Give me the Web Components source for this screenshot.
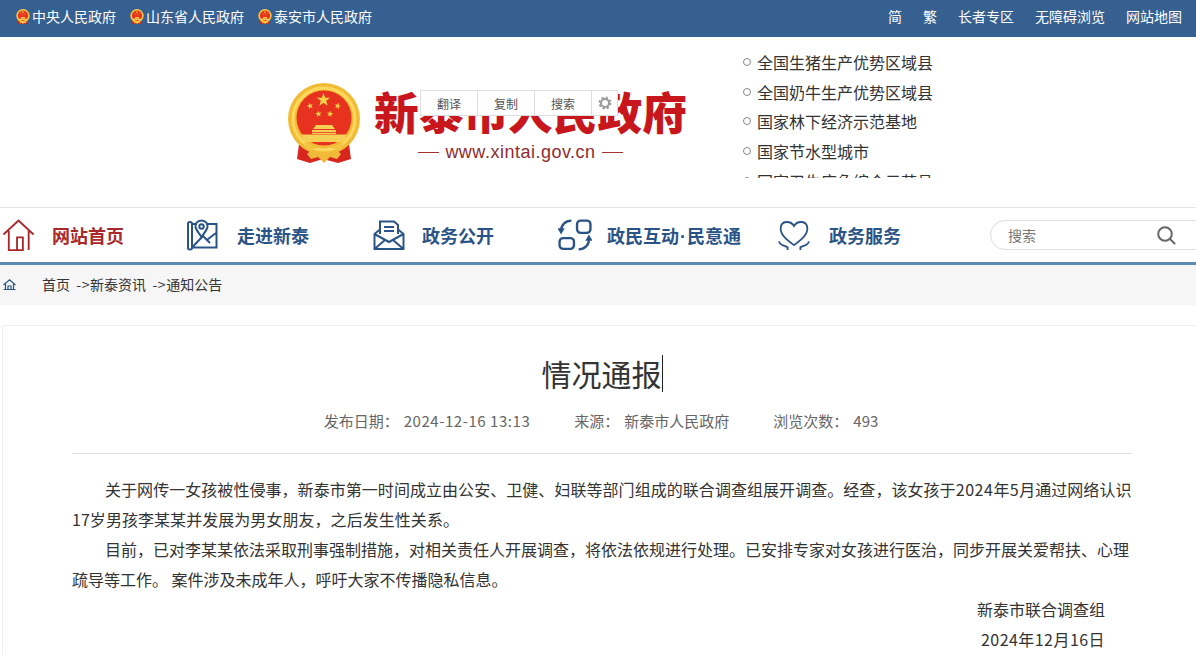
<!DOCTYPE html>
<html lang="zh-CN">
<head>
<meta charset="utf-8">
<title>情况通报</title>
<style>
html, body { margin: 0; padding: 0; height: 655px; overflow: hidden; background: #fff; }
body { font-family: "Noto Sans CJK SC", "Liberation Sans", sans-serif; color: #333; }
.num { letter-spacing: .6px; }
.arrow { letter-spacing: .6px; }
.dot { font-family: "Liberation Sans", sans-serif; margin: 0 1px; }
</style>
</head>
<body>
<site-page>
  <top-bar>
    <top-link slot="left">中央人民政府</top-link>
    <top-link slot="left">山东省人民政府</top-link>
    <top-link slot="left">泰安市人民政府</top-link>
    <span slot="right">简</span>
    <span slot="right">繁</span>
    <span slot="right">长者专区</span>
    <span slot="right">无障碍浏览</span>
    <span slot="right">网站地图</span>
  </top-bar>

  <site-masthead>
    <honor-item>全国生猪生产优势区域县</honor-item>
    <honor-item>全国奶牛生产优势区域县</honor-item>
    <honor-item>国家林下经济示范基地</honor-item>
    <honor-item>国家节水型城市</honor-item>
    <honor-item>国家卫生应急综合示范县</honor-item>
  </site-masthead>

  <main-nav>
    <nav-item style="--nav-color:#a8282c; --nav-gap:17px">
      <svg slot="icon" width="33" height="33" viewBox="1 15 34 34" fill="none" stroke="currentColor" stroke-width="1.900"><path d="M2.500 31 18 16.500 33.500 31M8 27V47H22.500V34H16.500V47M28.500 27V47"/></svg>
      网站首页
    </nav-item>
    <nav-item>
      <svg slot="icon" width="32" height="32" viewBox="0 0 32 32" fill="none" stroke="currentColor" stroke-width="2"><path d="M2 4.500C2 2.500 6 2.500 6 4.500V29C6 31 2 31 2 29ZM6 5H11M20 5H30.500V28.500H6M6 28.500 17 17 24 24M21.500 20.500 30 14"/><path d="M15.500 1.500C11 1.500 9 5 9.500 8 10 11 13 14 15.500 18 18 14 21 11 21.500 8 22 5 20 1.500 15.500 1.500Z"/><circle cx="15.500" cy="7.500" r="2.200"/></svg>
      走进新泰
    </nav-item>
    <nav-item style="--nav-gap:17px">
      <svg slot="icon" width="32" height="32" viewBox="0 0 32 32" fill="none" stroke="currentColor" stroke-width="2"><path d="M7 15V2.500H21L25 6V15M11 8H21M11 12H21"/><path d="M7 10.500 1.500 15V30H30.500V15L25 10.500M1.500 15 16 23 30.500 15M1.500 30 12 21M30.500 30 20 21"/></svg>
      政务公开
    </nav-item>
    <nav-item style="--nav-gap:15px">
      <svg slot="icon" width="34" height="32" viewBox="0 0 33 31" fill="none" stroke="currentColor" stroke-width="2.300"><rect x="18.500" y="1.500" width="13" height="12" rx="3.500"/><rect x="1.500" y="18.500" width="14" height="10.500" rx="3.500"/><path d="M13 1.500C7 1.500 3 6 3 11M20 29.500C26 29.500 30 25 30 20"/><path fill="currentColor" stroke="none" d="M-.5 9H6.500L3 15ZM26.500 21H33.500L30 15Z"/></svg>
      政民互动<span class="dot">·</span>民意通
    </nav-item>
    <nav-item>
      <svg slot="icon" width="32" height="32" viewBox="0 0 30 30" fill="none" stroke="currentColor" stroke-width="1.700"><path d="M15 6.500C12 1.500 3 1 2.500 8.500 2 15 9 20 15 24.500 21 20 28 15 27.500 8.500 27 1 18 1.500 15 6.500Z"/><path d="M1 21C2 25.500 6.500 24.500 9 26.500V29M29 21C28 25.500 23.500 24.500 21 26.500V29"/></svg>
      政务服务
    </nav-item>
    <search-box slot="end"></search-box>
  </main-nav>

  <bread-crumb>首页 &nbsp;<span class="arrow">-&gt;</span>新泰资讯 &nbsp;<span class="arrow">-&gt;</span>通知公告</bread-crumb>

  <news-article>
    <span slot="title">情况通报</span>
    <meta-item slot="meta" label="发布日期："><span style="letter-spacing:.55px">2024-12-16 13:13</span></meta-item>
    <meta-item slot="meta" label="来源：">新泰市人民政府</meta-item>
    <meta-item slot="meta" label="浏览次数：">493</meta-item>
    <p style="letter-spacing:.05px">关于网传一女孩被性侵事，新泰市第一时间成立由公安、卫健、妇联等部门组成的联合调查组展开调查。经查，该女孩于<span class="num">2024</span>年<span class="num">5</span>月通过网络认识17岁男孩李某某并发展为男女朋友，之后发生性关系。</p>
    <p>目前，已对李某某依法采取刑事强制措施，对相关责任人开展调查，将依法依规进行处理。已安排专家对女孩进行医治，同步开展关爱帮扶、心理疏导等工作。 案件涉及未成年人，呼吁大家不传播隐私信息。</p>
    <span slot="sign">新泰市联合调查组</span>
    <span slot="sign" style="letter-spacing:.45px">2024年12月16日</span>
  </news-article>
</site-page>

<script>
function starPoints(cx, cy, r, rot) {
    let pts = [];
    for (let i = 0; i < 10; i++) {
        let rad = i % 2 ? r * 0.4 : r;
        let a = (rot + i * 36 - 90) * Math.PI / 180;
        pts.push((cx + rad * Math.cos(a)).toFixed(2) + ',' + (cy + rad * Math.sin(a)).toFixed(2));
    }
    return pts.join(' ');
}

customElements.define('gov-emblem', class extends HTMLElement {
    constructor() {
        super();
        let shadow = this.attachShadow({mode: 'open'});
        shadow.innerHTML = `
        <style>
        :host { display: block; width: var(--emblem-w, 74px); height: var(--emblem-h, 80px); flex: none; }
        svg { display: block; width: 100%; height: 100%; }
        </style>
        <svg viewBox="7 8 74 80">
            <path fill="#d8261f" d="M20 62 17 84 30 88 43 84 58 88 71 84 68 62Z"/>
            <path fill="#f0b93c" d="M27 79C35 72 40 72 44 74 48 72 53 72 61 79L57 84 50 82 44 88 38 82 31 84Z"/>
            <circle cx="44" cy="44" r="36" fill="#f2bb35"/>
            <circle cx="44" cy="44" r="31" fill="none" stroke="#fcd95e" stroke-width="3"/>
            <circle cx="44" cy="43" r="27.500" fill="#e6321f"/>
            <polygon fill="#f8d448" points="${starPoints(43.5, 25, 7, 0)}"/>
            <polygon fill="#f8d448" points="${starPoints(30, 31, 3.4, -20)}"/>
            <polygon fill="#f8d448" points="${starPoints(57.700, 31, 3.4, 20)}"/>
            <polygon fill="#f8d448" points="${starPoints(38.500, 39, 3.4, -10)}"/>
            <polygon fill="#f8d448" points="${starPoints(50, 39, 3.4, 10)}"/>
            <path fill="#f6cf55" d="M36 50H52L55 54H33ZM32 55H56V59H32ZM21.500 59.500H66.500L64 67H24Z"/>
            <path fill="#e6321f" d="M32 57h24v.8H32z"/>
            <path fill="#f2c443" d="M24 66C32 74 56 74 64 66L60 76C50 71 38 71 28 76Z"/>
        </svg>`;
    }
});

customElements.define('top-link', class extends HTMLElement {
    constructor() {
        super();
        this.attachShadow({mode: 'open'}).innerHTML = `
        <style>
        :host { display: flex; align-items: center; gap: 2px; }
        gov-emblem { --emblem-w: 14px; --emblem-h: 15px; }
        </style>
        <gov-emblem></gov-emblem><slot></slot>`;
    }
});

customElements.define('top-bar', class extends HTMLElement {
    constructor() {
        super();
        this.attachShadow({mode: 'open'}).innerHTML = `
        <style>
        :host {
            display: flex;
            justify-content: space-between;
            align-items: center;
            height: 37px;
            padding: 0 14px 5px 16px;
            box-sizing: border-box;
            background: #36608f;
            color: #fff;
            font-size: 14px;
        }
        .left, .right { display: flex; align-items: center; }
        .left { gap: 14px; }
        .right { gap: 21px; }
        </style>
        <div class="left"><slot name="left"></slot></div>
        <div class="right"><slot name="right"></slot></div>`;
    }
});

customElements.define('honor-item', class extends HTMLElement {
    constructor() {
        super();
        this.attachShadow({mode: 'open'}).innerHTML = `
        <style>
        :host {
            display: flex;
            align-items: center;
            gap: 6px;
            height: 29.700px;
            font-size: 16px;
            color: #333;
            white-space: nowrap;
        }
        i { width: 6px; height: 6px; border: 1px solid #888; border-radius: 50%; flex: none; }
        </style>
        <i></i><slot></slot>`;
    }
});

customElements.define('select-bar', class extends HTMLElement {
    constructor() {
        super();
        this.attachShadow({mode: 'open'}).innerHTML = `
        <style>
        :host {
            position: absolute;
            left: 420px;
            top: 90px;
            display: flex;
            height: 26px;
            box-sizing: border-box;
            background: #fff;
            border: 1px solid #ddd;
            font-size: 12px;
            color: #555;
        }
        span {
            width: 57px;
            box-sizing: border-box;
            display: flex;
            align-items: center;
            justify-content: center;
            border-right: 1px solid #ddd;
        }
        b { width: 25px; display: flex; align-items: center; justify-content: center; }
        </style>
        <span>翻译</span><span>复制</span><span>搜索</span>
        <b><svg width="14" height="14" viewBox="0 0 14 14" fill="none" stroke="#9a9a9a"><circle cx="7" cy="7" r="4" stroke-width="2"/><circle cx="7" cy="7" r="5.500" stroke-width="2" stroke-dasharray="2.300 2.020"/></svg></b>`;
    }
});

customElements.define('site-masthead', class extends HTMLElement {
    constructor() {
        super();
        this.attachShadow({mode: 'open'}).innerHTML = `
        <style>
        :host {
            display: flex;
            align-items: flex-start;
            height: 170px;
            padding-left: 287px;
            box-sizing: border-box;
            background: #fff;
        }
        .logo { display: flex; margin-top: 46px; width: 456px; flex: none; }
        .brand { margin: 0 0 0 13px; width: 320px; }
        .name {
            font-size: 44.700px;
            line-height: 52px;
            font-weight: 900;
            color: #c8161d;
            white-space: nowrap;
            margin-top: 2px;
        }
        .url {
            display: flex;
            align-items: center;
            justify-content: space-between;
            margin: 4px 0 0 44px;
            width: 205px;
            font: 18px/22px "Liberation Sans", sans-serif;
            letter-spacing: .5px;
            color: #8f2b2f;
            white-space: nowrap;
        }
        .url i { width: 21px; height: 1px; background: #a5322f; flex: none; }
        .list { height: 131px; margin-top: 10px; overflow: hidden; }
        </style>
        <div class="logo">
            <gov-emblem></gov-emblem>
            <div class="brand">
                <div class="name">新泰市人民政府</div>
                <div class="url"><i></i>www.xintai.gov.cn<i></i></div>
            </div>
        </div>
        <div class="list"><slot></slot></div>
        <select-bar></select-bar>`;
    }
});

customElements.define('nav-item', class extends HTMLElement {
    constructor() {
        super();
        this.attachShadow({mode: 'open'}).innerHTML = `
        <style>
        :host {
            display: flex;
            align-items: center;
            gap: var(--nav-gap, 19px);
            color: var(--nav-color, #2b5486);
            font-size: 18px;
            font-weight: 700;
            white-space: nowrap;
        }
        ::slotted(svg) { display: block; flex: none; }
        .label { display: block; }
        </style>
        <slot name="icon"></slot><span class="label"><slot></slot></span>`;
    }
});

customElements.define('search-box', class extends HTMLElement {
    constructor() {
        super();
        this.attachShadow({mode: 'open'}).innerHTML = `
        <style>
        :host {
            display: flex;
            align-items: center;
            justify-content: space-between;
            width: 230px;
            height: 30px;
            padding: 0 43px 0 17px;
            box-sizing: border-box;
            border: 1px solid #ddd;
            border-radius: 15px;
            font-size: 14px;
            color: #777;
            flex: none;
        }
        svg { display: block; }
        </style>
        <span>搜索</span>
        <svg width="20" height="20" viewBox="0 0 20 20" fill="none" stroke="#666" stroke-width="2"><circle cx="9" cy="9" r="6.800"/><path d="M14 14 18.500 18.500" stroke-linecap="round"/></svg>`;
    }
});

customElements.define('main-nav', class extends HTMLElement {
    constructor() {
        super();
        this.attachShadow({mode: 'open'}).innerHTML = `
        <style>
        :host {
            display: flex;
            align-items: center;
            height: 58px;
            box-sizing: border-box;
            border-top: 1px solid #e6e6e6;
            border-bottom: 3px solid #5f8ab0;
            padding-left: 2px;
            overflow: hidden;
            background: #fff;
        }
        .items {
            display: grid;
            grid-template-columns: 184px 187px 185px 220px 212px;
            align-items: center;
            flex: none;
        }
        </style>
        <div class="items"><slot></slot></div>
        <slot name="end"></slot>`;
    }
});

customElements.define('bread-crumb', class extends HTMLElement {
    constructor() {
        super();
        this.attachShadow({mode: 'open'}).innerHTML = `
        <style>
        :host {
            display: flex;
            align-items: center;
            gap: 26px;
            height: 40px;
            padding: 0 0 2px 3px;
            box-sizing: border-box;
            background: #f6f6f6;
            font-size: 14px;
            color: #333;
            white-space: nowrap;
        }
        svg { display: block; flex: none; margin-top: 2px; }
        </style>
        <svg width="13" height="12" viewBox="0 0 13 12" fill="none" stroke="#2b5486" stroke-width="1.200"><path d="M.5 6 6.500 .8 12.500 6M2.500 5V10.500M10.500 5V10.500M.5 10.500H12.500M5 10.500V7H8V10.500"/></svg>
        <span><slot></slot></span>`;
    }
});

customElements.define('meta-item', class extends HTMLElement {
    constructor() {
        super();
        this.attachShadow({mode: 'open'}).innerHTML = `
        <style>
        :host { display: block; white-space: nowrap; }
        span { margin-right: 5px; }
        </style>
        <span id="label"></span><slot></slot>`;
    }
    connectedCallback() {
        this.shadowRoot.getElementById('label').textContent = this.getAttribute('label');
    }
});

customElements.define('news-article', class extends HTMLElement {
    constructor() {
        super();
        this.attachShadow({mode: 'open'}).innerHTML = `
        <style>
        :host {
            display: block;
            margin: 20px 0 0 2px;
            padding: 0 64px 40px 69px;
            border: 1px solid #f0f0f0;
            border-right: 0;
            background: #fff;
        }
        .title {
            display: flex;
            justify-content: center;
            align-items: center;
            margin: 0;
            padding-top: 8px;
            height: 78px;
            font-size: 30px;
            font-weight: 400;
            line-height: 40px;
            color: #333;
        }
        .title i { width: 1px; height: 37px; background: #222; margin-top: 1px; }
        .meta {
            display: flex;
            justify-content: center;
            gap: 44px;
            font-size: 15px;
            line-height: 22px;
            color: #666;
            margin-top: -2px;
            padding: 0 2px 21px 0;
            border-bottom: 1px solid #ddd;
        }
        .body {
            padding-top: 20px;
            font-size: 16px;
            line-height: 30px;
            color: #333;
        }
        ::slotted(p) { margin: 0; text-indent: 33px; }
        .sign {
            display: flex;
            flex-direction: column;
            align-items: flex-end;
            padding-right: 27px;
            font-size: 16px;
            line-height: 30px;
            color: #333;
        }
        </style>
        <h1 class="title"><slot name="title"></slot><i></i></h1>
        <div class="meta"><slot name="meta"></slot></div>
        <div class="body"><slot></slot></div>
        <div class="sign"><slot name="sign"></slot></div>`;
    }
});

customElements.define('site-page', class extends HTMLElement {
    constructor() {
        super();
        this.attachShadow({mode: 'open'}).innerHTML = `
        <style>
        :host { display: block; width: 1196px; }
        </style>
        <slot></slot>`;
    }
});
</script>
</body>
</html>
